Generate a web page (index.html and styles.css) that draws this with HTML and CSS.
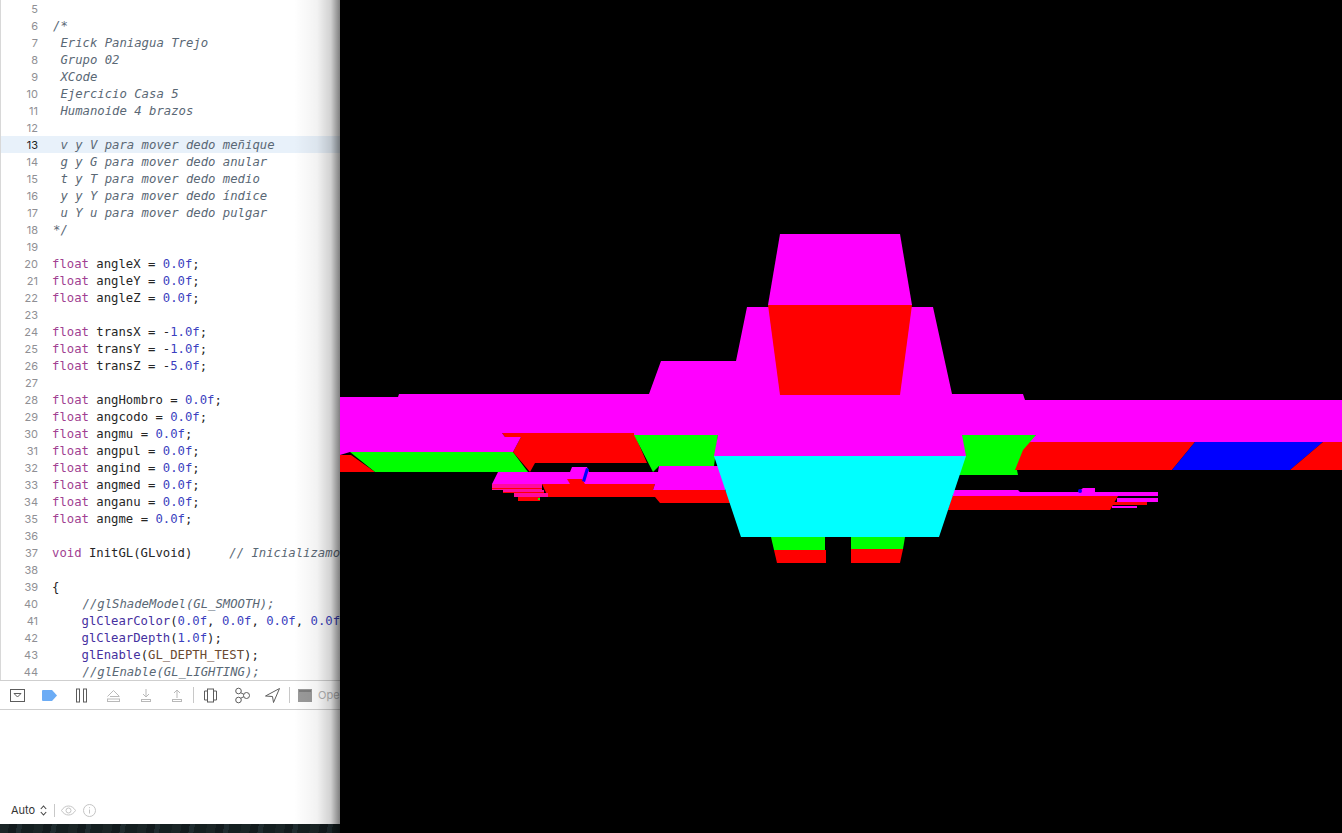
FILE: index.html
```html
<!DOCTYPE html>
<html>
<head>
<meta name="viewport" content="width=device-width, initial-scale=1">
<title>Ejercicio Casa 5</title>
<link rel="stylesheet" href="styles.css">
</head>
<body>
  <div class="desktop">
    <div class="xcode">
      <div class="editor">
        <div class="row"><span class="num">5</span><span class="code"></span></div>
        <div class="row"><span class="num">6</span><span class="code com">/*</span></div>
        <div class="row"><span class="num">7</span><span class="code com"> Erick Paniagua Trejo</span></div>
        <div class="row"><span class="num">8</span><span class="code com"> Grupo 02</span></div>
        <div class="row"><span class="num">9</span><span class="code com"> XCode</span></div>
        <div class="row"><span class="num">10</span><span class="code com"> Ejercicio Casa 5</span></div>
        <div class="row"><span class="num">11</span><span class="code com"> Humanoide 4 brazos</span></div>
        <div class="row"><span class="num">12</span><span class="code"></span></div>
        <div class="row current"><span class="num">13</span><span class="code com"> v y V para mover dedo meñique</span></div>
        <div class="row"><span class="num">14</span><span class="code com"> g y G para mover dedo anular</span></div>
        <div class="row"><span class="num">15</span><span class="code com"> t y T para mover dedo medio</span></div>
        <div class="row"><span class="num">16</span><span class="code com"> y y Y para mover dedo índice</span></div>
        <div class="row"><span class="num">17</span><span class="code com"> u Y u para mover dedo pulgar</span></div>
        <div class="row"><span class="num">18</span><span class="code com">*/</span></div>
        <div class="row"><span class="num">19</span><span class="code"></span></div>
        <div class="row"><span class="num">20</span><span class="code"><b>float</b> angleX = <i>0.0f</i>;</span></div>
        <div class="row"><span class="num">21</span><span class="code"><b>float</b> angleY = <i>0.0f</i>;</span></div>
        <div class="row"><span class="num">22</span><span class="code"><b>float</b> angleZ = <i>0.0f</i>;</span></div>
        <div class="row"><span class="num">23</span><span class="code"></span></div>
        <div class="row"><span class="num">24</span><span class="code"><b>float</b> transX = -<i>1.0f</i>;</span></div>
        <div class="row"><span class="num">25</span><span class="code"><b>float</b> transY = -<i>1.0f</i>;</span></div>
        <div class="row"><span class="num">26</span><span class="code"><b>float</b> transZ = -<i>5.0f</i>;</span></div>
        <div class="row"><span class="num">27</span><span class="code"></span></div>
        <div class="row"><span class="num">28</span><span class="code"><b>float</b> angHombro = <i>0.0f</i>;</span></div>
        <div class="row"><span class="num">29</span><span class="code"><b>float</b> angcodo = <i>0.0f</i>;</span></div>
        <div class="row"><span class="num">30</span><span class="code"><b>float</b> angmu = <i>0.0f</i>;</span></div>
        <div class="row"><span class="num">31</span><span class="code"><b>float</b> angpul = <i>0.0f</i>;</span></div>
        <div class="row"><span class="num">32</span><span class="code"><b>float</b> angind = <i>0.0f</i>;</span></div>
        <div class="row"><span class="num">33</span><span class="code"><b>float</b> angmed = <i>0.0f</i>;</span></div>
        <div class="row"><span class="num">34</span><span class="code"><b>float</b> anganu = <i>0.0f</i>;</span></div>
        <div class="row"><span class="num">35</span><span class="code"><b>float</b> angme = <i>0.0f</i>;</span></div>
        <div class="row"><span class="num">36</span><span class="code"></span></div>
        <div class="row"><span class="num">37</span><span class="code"><b>void</b> InitGL(GLvoid)     <em>// Inicializamo</em></span></div>
        <div class="row"><span class="num">38</span><span class="code"></span></div>
        <div class="row"><span class="num">39</span><span class="code">{</span></div>
        <div class="row"><span class="num">40</span><span class="code com">    //glShadeModel(GL_SMOOTH);</span></div>
        <div class="row"><span class="num">41</span><span class="code">    <u>glClearColor</u>(<i>0.0f</i>, <i>0.0f</i>, <i>0.0f</i>, <i>0.0f</i></span></div>
        <div class="row"><span class="num">42</span><span class="code">    <u>glClearDepth</u>(<i>1.0f</i>);</span></div>
        <div class="row"><span class="num">43</span><span class="code">    <u>glEnable</u>(<s>GL_DEPTH_TEST</s>);</span></div>
        <div class="row"><span class="num">44</span><span class="code com">    //glEnable(GL_LIGHTING);</span></div>
      </div>

      <div class="debugbar">
        <svg class="tool" style="width:15px" viewBox="0 0 15 13"><rect x=".5" y=".5" width="14" height="12" class="ln"/><path d="M4 4.500h7l-3.500 3.500z" class="ln"/></svg>
        <svg class="tool gap-tag" viewBox="0 0 15 11" style="width:15px"><path d="M1 0h9l5 5.500-5 5.500h-9a1 1 0 0 1-1-1v-9a1 1 0 0 1 1-1z" fill="#6cacf5"/></svg>
        <svg class="tool gap-pause" viewBox="0 0 11 14" style="width:11px"><rect x=".5" y=".5" width="3" height="13" class="ln"/><rect x="7.500" y=".5" width="3" height="13" class="ln"/></svg>
        <svg class="tool gap-over" viewBox="0 0 13 13" style="width:13px"><path d="M.5 7.500l6-6 6 6" class="off"/><path d="M3 7.500h9" class="off"/><rect x=".5" y="10" width="12" height="2.500" class="off"/></svg>
        <svg class="tool gap-in" viewBox="0 0 10 13" style="width:10px"><path d="M5 0v8M2 5l3 3 3-3" class="off"/><rect x=".5" y="10.500" width="9" height="2" class="off"/></svg>
        <svg class="tool gap-in" viewBox="0 0 10 13" style="width:10px"><path d="M5 9v-8M2 4l3-3 3 3" class="off"/><rect x=".5" y="10.500" width="9" height="2" class="off"/></svg>
        <span class="sep gap-sep"></span>
        <svg class="tool gap-view" viewBox="0 0 13 14" style="width:13px"><rect x="3.500" y=".5" width="6" height="13" class="ln"/><path d="M3.500 2.500h-3v9h3M9.500 2.500h3v9h-3" class="ln"/></svg>
        <svg class="tool gap-graph" viewBox="0 0 15 15" style="width:15px"><circle cx="3.500" cy="3" r="2.800" class="ln"/><circle cx="3.500" cy="12" r="2.800" class="ln"/><circle cx="11.500" cy="7.500" r="3" class="ln"/><path d="M5.800 4.800l3 1.500M5.800 10.200l3-1.500" class="ln"/></svg>
        <svg class="tool gap-loc" viewBox="0 0 15 15" style="width:15px"><path d="M14.500 .5l-14 7.500 7 .5 1 6z" class="ln"/></svg>
        <span class="sep gap-sep2"></span>
        <svg class="tool gap-term" viewBox="0 0 14 13" style="width:14px"><rect width="14" height="13" fill="#9a9a9a"/><rect x="1" y="1" width="12" height="2" fill="#7d7d7d"/></svg>
        <span class="target">Ope</span>
      </div>

      <div class="console"></div>

      <div class="statusbar">
        <span class="auto">Auto</span>
        <svg class="chev" viewBox="0 0 7 11"><path d="M.8 4l2.700-3 2.700 3M.8 7l2.700 3 2.700-3"/></svg>
        <span class="sep status-sep"></span>
        <svg class="eye" viewBox="0 0 15 11"><path d="M.5 5.500c3.500-6 10.500-6 14 0-3.500 6-10.500 6-14 0z"/><circle cx="7.500" cy="5.500" r="2.500"/></svg>
        <svg class="info" viewBox="0 0 13 13"><circle cx="6.500" cy="6.500" r="6"/><path d="M6.500 5.500v4M6.500 3.200v1"/></svg>
      </div>
      <div class="wallpaper"></div>
      <div class="shade"></div>
    </div>

    <svg class="gl" viewBox="340 0 1002 833">
      <!-- upper arms, back faces -->
      <polygon class="r" points="340,455 351,455 375,472 340,472"/>
      <polygon class="g" points="350,452 513,452 528,472 375,472"/>
      <polygon class="r" points="502,433 634,433 647,463 535,463 530,472 513,452 521,437 505,437"/>
      <polygon class="g" points="634,435 718,435 714,466 659,466 653,472"/>
      <polygon class="g" points="950,435 1036,435 1030,447 1017,470 1018,475 950,475"/>
      <polygon class="r" points="1030,442 1195,442 1172,470 1015,470 1023,450"/>
      <polygon class="b" points="1195,442 1323,442 1290,470 1172,470"/>
      <polygon class="r" points="1323,442 1342,442 1342,470 1290,470"/>

      <!-- lower arm and hand, left -->
      <polygon class="r" points="542,484 655,484 653,490 725,490 732,503 660,503 655,497 548,497"/>
      <polygon class="m" points="498,472 570,472 572,467 587,467 589,472 658,472 659,466 725,466 725,490 653,490 655,484 492,484"/>
      <polygon class="r" points="567,479 582,479 585,484 570,484"/>
      <polygon class="b" points="586,468 589,469 585,482 582,481"/>
      <rect class="p" x="492" y="484" width="50" height="6"/>
      <rect class="p" x="503" y="490" width="41" height="3"/>
      <rect class="p" x="514" y="493" width="34" height="4"/>
      <rect class="r" x="492" y="488" width="50" height="1"/>
      <rect class="r" x="503" y="492" width="41" height="1"/>
      <rect class="r" x="518" y="497" width="22" height="4"/>
      <rect class="g" x="538" y="498" width="2" height="2"/>

      <!-- lower arm and hand, right -->
      <polygon class="r" points="952,496 1118,496 1110,510 948,510"/>
      <polygon class="m" points="953,490 1018,490 1020,492 1078,492 1083,488 1095,488 1095,492 1158,492 1158,496 953,496"/>
      <circle class="b" cx="1080" cy="491" r="2"/>
      <rect class="m" x="1117" y="498" width="41" height="4"/>
      <rect class="r" x="1113" y="502" width="34" height="3"/>
      <rect class="m" x="1112" y="506" width="25" height="2"/>

      <!-- head, shoulders, long arm bar -->
      <polygon class="m" points="747,307 933,307 952,394 1023,394 1025,400 1342,400 1342,442 1030,442 1036,435 634,435 634,433 502,433 505,437 521,437 513,452 350,452 340,455 340,397 398,397 399,394 649,394 661,361 736,361"/>
      <polygon class="m" points="780,234 900,234 912,305 768,305"/>
      <polygon class="r" points="768,305 912,305 900,395 780,395"/>

      <!-- torso -->
      <polygon class="m" points="718,435 962,435 966,456 714,456"/>
      <polygon class="g" points="771,537 825,537 825,550 774,550"/>
      <polygon class="r" points="774,550 826,550 826,563 777,563"/>
      <polygon class="g" points="851,537 905,537 903,549 851,549"/>
      <polygon class="r" points="851,549 903,549 900,563 851,563"/>
      <polygon class="c" points="714,456 966,456 939,537 741,537"/>
    </svg>
  </div>
</body>
</html>
```

FILE: styles.css
```css
html, body {
  margin: 0;
  height: 100%;
  overflow: hidden;
  background: #000;
}

.desktop {
  display: flex;
  width: 1342px;
  height: 833px;
}

/* left window */
.xcode {
  position: relative;
  display: flex;
  flex-direction: column;
  width: 340px;
  height: 833px;
  flex: none;
  overflow: hidden;
  background: #fff;
}

.editor {
  height: 680px;
  flex: none;
  overflow: hidden;
  border-left: 1px solid #d8d8d8;
  box-sizing: border-box;
}

.row {
  display: flex;
  height: 17px;
  line-height: 19px;
}

.row.current {
  background: #e8f1fa;
}

.num {
  width: 38px;
  margin-left: -1px;
  flex: none;
  text-align: right;
  font-family: Inter, "Liberation Sans", sans-serif;
  font-size: 11px;
  color: #8f8f94;
}

.current .num {
  color: #1f1f1f;
}

.code {
  margin-left: 14px;
  white-space: pre;
  font-family: "DejaVu Sans Mono", monospace;
  font-size: 12.28px;
  color: #262626;
}

.com, .code em {
  font-style: italic;
  color: #5a6875;
}

.code.com {
  margin-left: 15px;
}

.code b {
  font-weight: normal;
  color: #a13f92;
}

.code i {
  font-style: normal;
  color: #3b3fc0;
}

.code u {
  text-decoration: none;
  color: #45309f;
}

.code s {
  text-decoration: none;
  color: #6b4a30;
}

/* debug bar */
.debugbar {
  display: flex;
  align-items: center;
  height: 30px;
  flex: none;
  padding-left: 10px;
  box-sizing: border-box;
  border-top: 1px solid #cfcfcf;
  border-bottom: 1px solid #cfcfcf;
  white-space: nowrap;
}

.tool {
  height: 15px;
  flex: none;
  overflow: visible;
}

.ln {
  fill: none;
  stroke: #5c5c5c;
  stroke-width: 1;
}

.off {
  fill: none;
  stroke: #b9b9b9;
  stroke-width: 1;
}

.sep {
  display: block;
  width: 1px;
  height: 16px;
  flex: none;
  background: #c8c8c8;
}

.gap-tag { margin-left: 17px; }
.gap-pause { margin-left: 19px; }
.gap-over { margin-left: 20px; }
.gap-in { margin-left: 21px; }
.gap-sep { margin-left: 11px; }
.gap-view { margin-left: 10px; }
.gap-graph { margin-left: 18px; }
.gap-loc { margin-left: 15px; }
.gap-sep2 { margin-left: 9px; }
.gap-term { margin-left: 8px; }

.target {
  margin-left: 6px;
  font-family: Inter, "Liberation Sans", sans-serif;
  font-size: 11px;
  color: #b5b5b5;
}

.console {
  height: 86px;
  flex: none;
}

/* bottom bar of the console */
.statusbar {
  display: flex;
  align-items: center;
  height: 28px;
  flex: none;
  padding-left: 11px;
  box-sizing: border-box;
}

.auto {
  font-family: Inter, "Liberation Sans", sans-serif;
  font-size: 11px;
  color: #333;
}

.chev {
  width: 7px;
  height: 11px;
  margin-left: 5px;
  fill: none;
  stroke: #444;
  stroke-width: 1.1;
}

.status-sep {
  height: 13px;
  margin-left: 7px;
}

.eye {
  width: 15px;
  height: 11px;
  margin-left: 6px;
  fill: none;
  stroke: #c4c4c4;
}

.info {
  width: 13px;
  height: 13px;
  margin-left: 7px;
  fill: none;
  stroke: #c4c4c4;
}

.wallpaper {
  flex: 1;
  background: repeating-linear-gradient(100deg, #1a2526 0 9px, #121b1d 9px 17px, #1f2c2f 17px 22px, #141f20 22px 34px);
}

/* shadow the GL window throws on this one */
.shade {
  position: absolute;
  top: 0;
  right: 0;
  bottom: 0;
  width: 46px;
  pointer-events: none;
  background: linear-gradient(to right, rgba(0,0,0,0), rgba(0,0,0,.05) 50%, rgba(0,0,0,.18) 80%, rgba(0,0,0,.5));
}

/* GL window */
.gl {
  display: block;
  width: 1002px;
  height: 833px;
  flex: none;
  background: #000;
}

.m { fill: #ff00ff; }
.r { fill: #ff0000; }
.g { fill: #00ff00; }
.b { fill: #0000ff; }
.c { fill: #00ffff; }
.p { fill: #ff0aa0; }
```
